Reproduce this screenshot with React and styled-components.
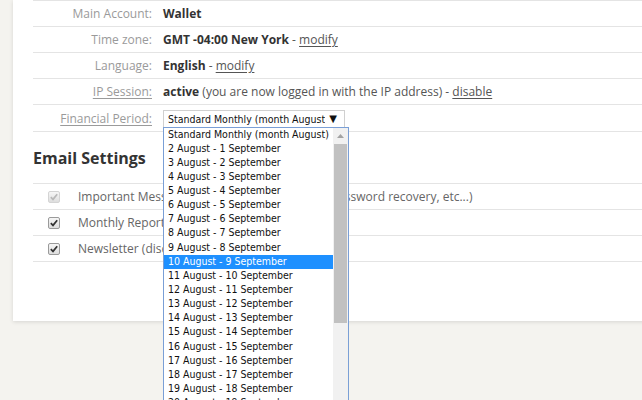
import React from "react";
import styled, { createGlobalStyle } from "styled-components";

const GlobalStyle = createGlobalStyle`
  html, body {
    margin: 0;
    padding: 0;
    background: #f4f3ef;
    overflow: hidden;
  }
  body {
    font-family: "Open Sans", "Liberation Sans", sans-serif;
    font-size: 12px;
    color: #333;
  }
`;

const accountRows = [
  { label: "Main Account:", value: "Wallet" },
  { label: "Time zone:", value: "GMT -04:00 New York", action: "modify" },
  { label: "Language:", value: "English", action: "modify" },
  {
    label: "IP Session:",
    linked: true,
    value: "active",
    note: "(you are now logged in with the IP address)",
    action: "disable",
  },
];

const periods = ["Standard Monthly (month August)"];
for (let d = 2; d <= 20; d++) {
  periods.push(`${d} August - ${d - 1} September`);
}

const emailRows = [
  { text: "Important Messages (account security alerts, password recovery, etc...)", disabled: true },
  { text: "Monthly Report (account summary)" },
  { text: "Newsletter (discounts, news)" },
];

const Page = styled.div`
  padding-left: 13px;
  height: 400px;
`;

const Card = styled.div`
  background: #fff;
  width: 700px;
  padding: 0 0 59px 20px;
  box-shadow: 0 1px 4px rgba(0, 0, 0, 0.12);
`;

const Row = styled.div`
  display: flex;
  align-items: center;
  height: ${(p) => p.$h || 25}px;
  border-bottom: 1px solid #e4e4e4;
  ${(p) => p.$first && "border-top: 1px solid #e4e4e4;"}
`;

const Label = styled.div`
  width: 119px;
  padding-right: 11px;
  text-align: right;
  color: #9a9a9a;
  white-space: nowrap;
  text-decoration: ${(p) => (p.$linked ? "underline" : "none")};
  text-underline-offset: 2px;
`;

const Value = styled.div`
  display: flex;
  align-items: center;
  white-space: nowrap;
  color: #555;
`;

const Strong = styled.b`
  font-weight: 700;
  color: #333;
`;

const Link = styled.a`
  color: #555;
  text-decoration: underline;
  text-underline-offset: 2px;
  cursor: pointer;
`;

const Heading = styled.h2`
  margin: 0;
  height: 51px;
  display: flex;
  align-items: center;
  font-size: 16px;
  font-weight: 700;
  color: #333;
  border-bottom: 1px solid #e4e4e4;
`;

const CheckBox = styled.span`
  width: 10px;
  height: 10px;
  margin: 0 18px 0 15px;
  border: 1px solid ${(p) => (p.$disabled ? "#d4d4d4" : "#9a9a9a")};
  border-radius: 2px;
  background: linear-gradient(#f6f6f6, #dedede);
  display: flex;
  align-items: center;
  justify-content: center;
  svg {
    width: 8px;
    height: 8px;
  }
`;

const CheckText = styled.span`
  color: #666;
  white-space: nowrap;
`;

const SelectWrap = styled.div`
  position: relative;
  font-family: "DejaVu Sans Condensed", "DejaVu Sans", sans-serif;
  font-size: 10.5px;
  color: #111;
`;

const SelectBox = styled.div`
  width: 176px;
  height: 16px;
  border: 1px solid #d0d0d0;
  border-bottom: none;
  display: flex;
  align-items: center;
  padding-left: 4px;
  box-sizing: content-box;
  span {
    flex: 1;
    overflow: hidden;
    white-space: nowrap;
  }
  i {
    font-style: normal;
    font-family: "DejaVu Sans", sans-serif;
    font-size: 10px;
    padding: 0 7px 0 4px;
  }
`;

const List = styled.div`
  position: absolute;
  top: 100%;
  left: 0;
  width: 184px;
  height: 300px;
  background: #fff;
  border: 1px solid #7a9fd6;
  display: flex;
  z-index: 5;
`;

const Options = styled.div`
  flex: 1;
  overflow: hidden;
`;

const Option = styled.div`
  height: 14.15px;
  line-height: 12px;
  padding-left: 4px;
  white-space: nowrap;
  background: ${(p) => (p.$active ? "#1e90ff" : "transparent")};
  color: ${(p) => (p.$active ? "#fff" : "#111")};
`;

const Scrollbar = styled.div`
  width: 15px;
  background: #f1f1f1;
  display: flex;
  flex-direction: column;
  align-items: center;
`;

const Arrow = styled.div`
  height: 16px;
  display: flex;
  align-items: center;
  justify-content: center;
  svg {
    width: 7px;
    height: 4px;
  }
`;

const Thumb = styled.div`
  width: 13px;
  height: 179px;
  background: #c1c1c1;
`;

const Check = ({ color }) => (
  <svg viewBox="0 0 8 8">
    <path d="M0.8 4.2 L3 6.4 L7.2 1.2" fill="none" stroke={color} strokeWidth="1.7" />
  </svg>
);

const App = () => {
  return (
    <>
      <GlobalStyle />
      <Page>
        <Card>
          {accountRows.map((r, i) => (
            <Row key={r.label} $first={i === 0}>
              <Label $linked={r.linked}>{r.label}</Label>
              <Value>
                <Strong>{r.value}</Strong>
                {r.note && <>&nbsp;{r.note}</>}
                {r.action && (
                  <>
                    &nbsp;-&nbsp;<Link>{r.action}</Link>
                  </>
                )}
              </Value>
            </Row>
          ))}
          <Row $h={26}>
            <Label $linked>Financial Period:</Label>
            <SelectWrap>
              <SelectBox>
                <span>Standard Monthly (month August)</span>
                <i>▼</i>
              </SelectBox>
              <List>
                <Options>
                  {periods.map((p, i) => (
                    <Option key={p} $active={i === 9}>
                      {p}
                    </Option>
                  ))}
                </Options>
                <Scrollbar>
                  <Arrow>
                    <svg viewBox="0 0 7 4">
                      <path d="M0 4 L3.5 0 L7 4 Z" fill="#a3a3a3" />
                    </svg>
                  </Arrow>
                  <Thumb />
                </Scrollbar>
              </List>
            </SelectWrap>
          </Row>
          <Heading>Email Settings</Heading>
          {emailRows.map((r) => (
            <Row key={r.text}>
              <CheckBox $disabled={r.disabled}>
                <Check color={r.disabled ? "#b8b8b8" : "#333"} />
              </CheckBox>
              <CheckText>{r.text}</CheckText>
            </Row>
          ))}
        </Card>
      </Page>
    </>
  );
};

export default App;
